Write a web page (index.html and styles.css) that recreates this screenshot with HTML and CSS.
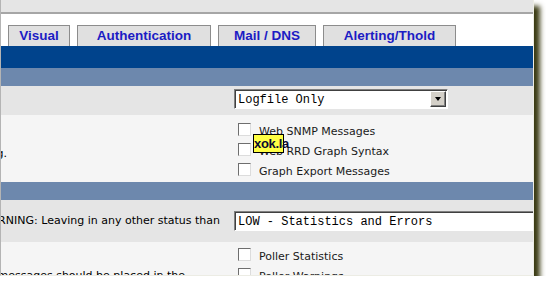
FILE: index.html
```html
<!DOCTYPE html>
<html lang="en">
<head>
  <meta charset="UTF-8">
  <title>Settings</title>
  <link rel="stylesheet" href="styles.css">
</head>
<body>
  <div class="window">
    <div class="topbar"></div>

    <div class="tabs">
      <div class="tab tab-visual">Visual</div>
      <div class="tab tab-auth">Authentication</div>
      <div class="tab tab-mail">Mail / DNS</div>
      <div class="tab tab-alert">Alerting/Thold</div>
    </div>

    <div class="band-dark"></div>
    <div class="band-light"></div>

    <!-- Log destination -->
    <div class="row row-dark row-logfile">
      <div class="desc"></div>
      <div class="field">
        <div class="select select-short">
          <span class="select-text">Logfile Only</span>
          <span class="select-btn"><span class="arrow"></span></span>
        </div>
      </div>
    </div>

    <!-- Web logging -->
    <div class="row row-light row-web">
      <div class="desc desc-web"><span>want in the logging.</span></div>
      <div class="field checklist">
        <label class="check"><span class="box"></span><span class="check-text">Web SNMP Messages</span></label>
        <label class="check"><span class="box"></span><span class="check-text">Web RRD Graph Syntax</span></label>
        <label class="check"><span class="box"></span><span class="check-text">Graph Export Messages</span></label>
      </div>
    </div>

    <div class="band-light"></div>

    <!-- Poller logging level -->
    <div class="row row-dark row-level">
      <div class="desc desc-level"><span>log file. WARNING: Leaving in any other status than</span></div>
      <div class="field">
        <div class="select select-long">
          <span class="select-text">LOW - Statistics and Errors</span>
        </div>
      </div>
    </div>

    <!-- Poller syslog -->
    <div class="row row-light row-poller">
      <div class="desc desc-poller"><span>What messages should be placed in the</span></div>
      <div class="field checklist checklist-poller">
        <label class="check"><span class="box"></span><span class="check-text">Poller Statistics</span></label>
        <label class="check"><span class="box"></span><span class="check-text">Poller Warnings</span></label>
      </div>
    </div>

    <div class="tooltip">xok.la</div>
  </div>
</body>
</html>
```

FILE: styles.css
```css
/* Reset */
* {
  margin: 0;
  padding: 0;
  box-sizing: border-box;
}

body {
  background: #ffffff;
  font-family: "DejaVu Sans", Verdana, sans-serif;
  font-size: 11px;
  color: #000;
}

.window {
  position: relative;
  width: 534px;
  height: 276px;
  overflow: hidden;
  background: #ffffff;
  border-left: 1px solid #b4b4b4;
  border-right: 1px solid #ecece4;
  border-bottom: 1px solid #ecece4;
  box-shadow: 6px 6px 5px #3b3b14;
}

.topbar {
  height: 14px;
  background: #e5e5e5;
  border-bottom: 2px solid #a6a6a6;
}

/* Tabs */
.tabs {
  display: flex;
  gap: 7px;
  height: 32px;
  padding: 11px 0 0 7px;
}

.tab {
  height: 21px;
  background: #e0e0e0;
  border: 1px solid #8c8c8c;
  border-bottom: 0;
  font: bold 13.5px "Liberation Sans", Arial, sans-serif;
  line-height: 20px;
  color: #1c1cc4;
  text-align: center;
}

.tab-visual { width: 62px; }
.tab-auth { width: 134px; }
.tab-mail { width: 98px; }
.tab-alert { width: 133px; }

.band-dark {
  height: 22px;
  background: #00438c;
}

.band-light {
  height: 18px;
  background: #6d88ad;
}

/* Setting rows */
.row {
  display: grid;
  grid-template-columns: 233px 1fr;
}

.row-dark { background: #e5e5e5; }
.row-light { background: #f5f5f5; }

.row-logfile { height: 29px; }
.row-web { height: 67px; }
.row-level { height: 42px; }
.row-poller { height: 40px; }

.desc {
  display: flex;
  justify-content: flex-end;
  overflow: hidden;
  white-space: nowrap;
  line-height: 13px;
}

.desc-web { padding: 32px 227px 0 0; }
.desc-level { padding: 14px 14px 0 0; }
.desc-poller { padding: 27px 49px 0 0; }

.field {
  min-width: 0;
}

/* Drop-downs */
.select {
  display: flex;
  align-items: center;
  height: 20px;
  padding-left: 3px;
  background: #ffffff;
  border: 1px solid;
  border-color: #808080 #ffffff #ffffff #808080;
  box-shadow: inset 1px 1px 0 #404040;
  font: 12px "Liberation Mono", "Courier New", monospace;
  white-space: nowrap;
}

.select-short {
  width: 214px;
  margin-top: 3px;
}

.select-long {
  width: 340px;
  height: 20px;
  margin-top: 11px;
}

.select-text {
  padding-top: 2px;
}

.select-btn {
  display: flex;
  align-items: center;
  justify-content: center;
  width: 16px;
  height: 16px;
  margin-left: auto;
  margin-right: 1px;
  background: #d4d0c8;
  border: 1px solid;
  border-color: #ffffff #404040 #404040 #ffffff;
  box-shadow: inset -1px -1px 0 #808080;
}

.arrow {
  width: 0;
  height: 0;
  border-left: 3.5px solid transparent;
  border-right: 3.5px solid transparent;
  border-top: 4px solid #000;
}

/* Checkbox lists */
.checklist {
  padding: 8px 0 0 4px;
}

.checklist-poller {
  padding-top: 6px;
}

.check {
  display: flex;
  align-items: flex-start;
  gap: 8px;
  height: 20px;
  color: #1a1a1a;
}

.box {
  width: 13px;
  height: 13px;
  flex: none;
  background: #ffffff;
  border: 1px solid;
  border-color: #6e6e6e #dcdcdc #dcdcdc #6e6e6e;
}

.check-text {
  padding-top: 2px;
  line-height: 13px;
  white-space: nowrap;
}

/* Tooltip over the list */
.tooltip {
  position: absolute;
  left: 252px;
  top: 134px;
  width: 31px;
  height: 19px;
  background: #ffff44;
  border: 1px solid #000;
  font: bold 13px "Liberation Sans Narrow", "Liberation Sans", sans-serif;
  line-height: 17px;
  color: #0a0a30;
  text-align: center;
  letter-spacing: -0.3px;
}
```
